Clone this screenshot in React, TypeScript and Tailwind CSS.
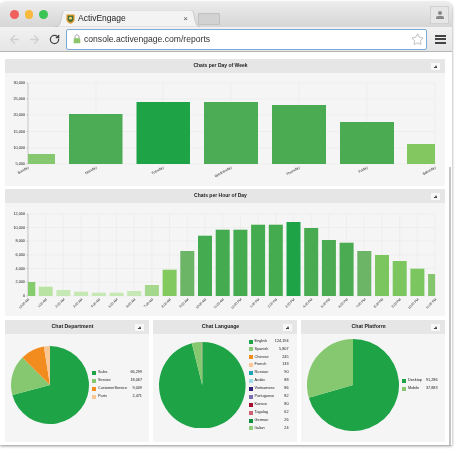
import React from 'react'
import { ArrowLeft, ArrowRight, RotateCw, Star } from 'lucide-react'

type Slice = { end: number; color: string }
type LegendRow = { label: string; value: string; color: string }

const dayTicks = [
  { label: '30,000', y: 83 },
  { label: '25,000', y: 99 },
  { label: '20,000', y: 115 },
  { label: '15,000', y: 131.5 },
  { label: '10,000', y: 148 },
  { label: '5,000', y: 164 },
]

const dayBars = [
  { label: 'Sunday', x: 28, w: 27, top: 154, tick: 28, color: '#85c86f' },
  { label: 'Monday', x: 69, w: 53.5, top: 114, tick: 96, color: '#4cab55' },
  { label: 'Tuesday', x: 136.5, w: 53.5, top: 102, tick: 163, color: '#1ea446' },
  { label: 'Wednesday', x: 204, w: 54, top: 102, tick: 231, color: '#4cab55' },
  { label: 'Thursday', x: 272, w: 54, top: 105, tick: 299, color: '#4aab53' },
  { label: 'Friday', x: 340, w: 54, top: 122, tick: 367, color: '#4aab53' },
  { label: 'Saturday', x: 407, w: 28, top: 144, tick: 435, color: '#82c75f' },
]

const hourTicks = [
  { label: '12,000', y: 214 },
  { label: '10,000', y: 227.5 },
  { label: '8,000', y: 241 },
  { label: '6,000', y: 255 },
  { label: '4,000', y: 268.5 },
  { label: '2,000', y: 282 },
  { label: '0', y: 296 },
]

const hourTops = [282, 286.7, 290, 291.7, 292.7, 292.7, 291, 285, 269.7, 251, 235.7, 229.7, 229.7, 224.7, 224.7, 222, 228, 240, 242.7, 251, 255, 261, 268.7, 274]
const hourColors = ['#85cc6e', '#b9e3a2', '#c5e8b4', '#c5e8b4', '#c5e8b4', '#c5e8b4', '#c5e8b4', '#a4d98d', '#82c95f', '#6cb566', '#44ab50', '#44ab50', '#45ab4f', '#45ab4f', '#45ab4f', '#1ea446', '#48ab52', '#4aab52', '#4aab52', '#6cb566', '#7cc660', '#7cc660', '#7cc660', '#84c56e']
const hourLabels = ['12:00 AM', '1:00 AM', '2:00 AM', '3:00 AM', '4:00 AM', '5:00 AM', '6:00 AM', '7:00 AM', '8:00 AM', '9:00 AM', '10:00 AM', '11:00 AM', '12:00 PM', '1:00 PM', '2:00 PM', '3:00 PM', '4:00 PM', '5:00 PM', '6:00 PM', '7:00 PM', '8:00 PM', '9:00 PM', '10:00 PM', '11:00 PM']

const departments: LegendRow[] = [
  { label: 'Sales', value: '66,299', color: '#1ea446' },
  { label: 'Service', value: '18,067', color: '#85c86f' },
  { label: 'CustomerService', value: '9,009', color: '#f28c1e' },
  { label: 'Parts', value: '2,471', color: '#f9c694' },
]

const languages: LegendRow[] = [
  { label: 'English', value: '124,194', color: '#1ea446' },
  { label: 'Spanish', value: '5,807', color: '#85c86f' },
  { label: 'Chinese', value: '245', color: '#f28c1e' },
  { label: 'French', value: '133', color: '#f9c694' },
  { label: 'Russian', value: '90', color: '#1aa3b8' },
  { label: 'Arabic', value: '88', color: '#9bdde0' },
  { label: 'Vietnamese', value: '86', color: '#331f7a' },
  { label: 'Portuguese', value: '82', color: '#7a6bb8' },
  { label: 'Korean', value: '80', color: '#a50f2d' },
  { label: 'Tagalog', value: '62', color: '#cf5f72' },
  { label: 'German', value: '26', color: '#0f8f3c' },
  { label: 'Italian', value: '24', color: '#8ccc7a' },
]

const platforms: LegendRow[] = [
  { label: 'Desktop', value: '91,286', color: '#1ea446' },
  { label: 'Mobile', value: '37,883', color: '#85c86f' },
]

const Pie = ({ r, slices }: { r: number; slices: Slice[] }) => {
  const point = (deg: number) => {
    const rad = (deg * Math.PI) / 180
    return `${r + r * Math.sin(rad)} ${r - r * Math.cos(rad)}`
  }
  let start = 0
  return (
    <svg width={r * 2} height={r * 2} className="shrink-0">
      {slices.map((s) => {
        const large = s.end - start > 180 ? 1 : 0
        const d = `M${r} ${r}L${point(start)}A${r} ${r} 0 ${large} 1 ${point(s.end)}Z`
        start = s.end
        return <path key={s.end} d={d} fill={s.color} />
      })}
    </svg>
  )
}

const Legend = ({ rows, className }: { rows: LegendRow[]; className: string }) => (
  <div className={`flex flex-col text-[3.8px] text-[#222] ${className}`}>
    {rows.map((row) => (
      <div key={row.label} className="flex h-[7.9px] items-center">
        <span className="mr-[2px] h-[4px] w-[4px] shrink-0" style={{ backgroundColor: row.color }} />
        <span className="flex-1 whitespace-nowrap">{row.label}</span>
        <span>{row.value}</span>
      </div>
    ))}
  </div>
)

const CollapseButton = () => (
  <div className="flex h-[7px] w-[9px] shrink-0 flex-col items-center justify-center bg-[#f8f8f8]">
    <span className="h-0 w-0 border-x-[1.5px] border-b-[2px] border-x-transparent border-b-[#444]" />
    <span className="h-[1px] w-[3px] bg-[#444]" />
  </div>
)

const Panel = ({ title, className, titleClass, children }: { title: string; className: string; titleClass: string; children: React.ReactNode }) => (
  <div className={`flex flex-col bg-[#f5f5f5] ${className}`}>
    <div className="flex h-[14px] shrink-0 items-center bg-[#e6e6e6] px-[5px]">
      <span className={`flex-1 text-center font-bold text-[#222] ${titleClass}`}>{title}</span>
      <CollapseButton />
    </div>
    {children}
  </div>
)

const YAxis = ({ ticks, bottom }: { ticks: { label: string; y: number }[]; bottom: number }) => (
  <g>
    {ticks.map((t) => (
      <g key={t.label}>
        <line x1="28" x2="435" y1={t.y} y2={t.y} stroke="#e9e9e9" strokeWidth="0.6" />
        <line x1="26.5" x2="28" y1={t.y} y2={t.y} stroke="#999" strokeWidth="0.5" />
        <text x="25" y={t.y + 1.3} textAnchor="end" fontSize="3.8" fill="#222">{t.label}</text>
      </g>
    ))}
    <line x1="28" x2="28" y1={ticks[0].y} y2={bottom} stroke="#aaa" strokeWidth="0.6" />
  </g>
)

const DayChart = () => (
  <svg viewBox="5 73 440 113" width="440" height="113">
    {dayBars.slice(1).map((b) => (
      <line key={b.label} x1={b.tick} x2={b.tick} y1="83" y2="164" stroke="#e9e9e9" strokeWidth="0.6" />
    ))}
    <YAxis ticks={dayTicks} bottom={164} />
    {dayBars.map((b) => (
      <g key={b.label}>
        <rect x={b.x} y={b.top} width={b.w} height={164 - b.top} fill={b.color} />
        <text x={b.tick + 1} y="168" textAnchor="end" fontSize="3.6" fill="#222" transform={`rotate(-30 ${b.tick + 1} 168)`}>{b.label}</text>
      </g>
    ))}
  </svg>
)

const HourChart = () => (
  <svg viewBox="5 203 440 113" width="440" height="113">
    {hourLabels.map((l, i) => (
      <line key={l} x1={28 + i * 17.7} x2={28 + i * 17.7} y1="214" y2="296" stroke="#e9e9e9" strokeWidth="0.6" />
    ))}
    <YAxis ticks={hourTicks} bottom={296} />
    {hourTops.map((top, i) => {
      const c = 28 + i * 17.7
      const x = i === 0 ? 28 : c - 7
      const w = i === 0 ? 7.3 : i === 23 ? 7 : 14
      return <rect key={hourLabels[i]} x={x} y={top} width={w} height={296 - top} fill={hourColors[i]} />
    })}
    {hourLabels.map((l, i) => {
      const x = 29.5 + i * 17.7
      return <text key={l} x={x} y="299.5" textAnchor="end" fontSize="3.2" fill="#222" transform={`rotate(-45 ${x} 299.5)`}>{l}</text>
    })}
  </svg>
)

const App = () => {
  return (
    <div className="h-[450px] w-[456px] overflow-hidden bg-white pt-[2px] font-['Liberation_Sans',Arial,sans-serif] blur-[0.35px]">
      <div className="flex h-[443px] w-[452px] flex-col overflow-hidden rounded-t-[6px] bg-white shadow-[0_1px_3px_rgba(0,0,0,0.45)]">
        {/* tab strip */}
        <div className="flex h-[25px] shrink-0 items-end bg-linear-to-b from-[#ececec] to-[#d6d6d6]">
          <div className="flex h-full w-[55px] items-center gap-[6px] pl-[10px]">
            <span className="h-[8.5px] w-[8.5px] rounded-full bg-[#f0605c]" />
            <span className="h-[8.5px] w-[8.5px] rounded-full bg-[#f9b93c]" />
            <span className="h-[8.5px] w-[8.5px] rounded-full bg-[#3cc453]" />
          </div>
          <div className="relative flex h-[17px] w-[145px] items-center pl-[11px] pr-[12px]">
            <svg viewBox="0 0 145 17" width="145" height="17" className="absolute inset-0">
              <path d="M0 17C4 17 5 14 6 10L7.5 3C8 1 9 0 11 0H135C137 0 138 1 138.5 3L140 10C141 14 142 17 145 17Z" fill="#f3f3f3" stroke="#b9b9b9" strokeWidth="0.6" />
            </svg>
            <svg viewBox="0 0 10 11" width="9" height="10" className="relative mr-[3px] shrink-0">
              <path d="M0.5 0.5H9.5V6C9.5 8.5 7 10 5 10.8C3 10 0.5 8.5 0.5 6Z" fill="#d9952b" />
              <path d="M2 2H8V5.8C8 7.2 6.3 8.2 5 8.9C3.7 8.2 2 7.2 2 5.8Z" fill="#3f6d3a" />
              <circle cx="5" cy="4.6" r="1.6" fill="#f0d27a" />
            </svg>
            <span className="relative flex-1 text-[8.5px] text-[#222]">ActivEngage</span>
            <span className="relative text-[8px] leading-none text-[#555]">×</span>
          </div>
          <div className="mb-[2px] ml-[-2px] h-[12px] w-[22px] rounded-[2px] bg-[#d2d2d2] shadow-[inset_0_0_0_0.5px_#b0b0b0]" />
          <div className="mb-[3px] ml-auto mr-[3px] flex h-[18px] w-[19px] flex-col items-center justify-center rounded-[2px] bg-[#e6e6e6] shadow-[inset_0_0_0_0.5px_#bbb]">
            <span className="h-[4px] w-[4px] rounded-full bg-[#888]" />
            <span className="mt-[1px] h-[2.5px] w-[8px] rounded-t-[2px] bg-[#888]" />
          </div>
        </div>
        {/* toolbar */}
        <div className="flex h-[25px] shrink-0 items-center border-b border-[#b5b5b5] bg-linear-to-b from-[#f2f2f2] to-[#e6e6e6]">
          <div className="flex w-[66px] items-center pl-[8px]">
            <ArrowLeft size={13} strokeWidth={2.5} className="text-[#d0d0d0]" />
            <ArrowRight size={13} strokeWidth={2.5} className="ml-[7px] text-[#d0d0d0]" />
            <RotateCw size={11} strokeWidth={2.8} className="ml-[8px] text-[#444]" />
          </div>
          <div className="flex h-[21px] w-[361px] items-center rounded-[2px] border border-[#7cabd9] bg-white pl-[6px] pr-[2px]">
            <svg viewBox="0 0 9 11" width="8" height="10" className="mr-[3px] shrink-0">
              <path d="M2.2 5V3.2C2.2 1.8 3.2 0.8 4.5 0.8S6.8 1.8 6.8 3.2V5" fill="none" stroke="#9a9a9a" strokeWidth="1" />
              <rect x="0.8" y="4.6" width="7.4" height="5.8" rx="0.8" fill="#8cc56a" />
            </svg>
            <span className="flex-1 text-[8.6px] text-[#333]">console.activengage.com/reports</span>
            <Star size={13} strokeWidth={1} className="text-[#8a8a8a]" />
          </div>
          <div className="ml-[8px] flex w-[11px] flex-col gap-[1.5px]">
            <span className="h-[2px] bg-[#444]" />
            <span className="h-[2px] bg-[#444]" />
            <span className="h-[2px] bg-[#444]" />
          </div>
        </div>
        {/* page */}
        <div className="flex min-h-0 flex-1">
          <div className="flex w-[449px] shrink-0 flex-col pl-[5px] pt-[7px]">
            <Panel title="Chats per Day of Week" className="h-[127px] w-[440px]" titleClass="text-[5px]">
              <DayChart />
            </Panel>
            <Panel title="Chats per Hour of Day" className="mt-[3px] h-[127px] w-[440px]" titleClass="text-[5px]">
              <HourChart />
            </Panel>
            <div className="mt-[4px] flex w-[440px] gap-[4px]">
              <Panel title="Chat Department" className="h-[122px] w-[144px]" titleClass="text-[5.2px]">
                <div className="flex flex-1 items-center pb-[6px] pl-[6px]">
                  <Pie r={39} slices={[{ end: 255, color: '#1ea446' }, { end: 315, color: '#85c86f' }, { end: 351, color: '#f28c1e' }, { end: 360, color: '#f9c694' }]} />
                  <Legend rows={departments} className="ml-[3px] w-[50px]" />
                </div>
              </Panel>
              <Panel title="Chat Language" className="h-[122px] w-[144px]" titleClass="text-[5.2px]">
                <div className="flex flex-1 items-center pb-[6px] pl-[6px]">
                  <Pie r={43.3} slices={[{ end: 346, color: '#1ea446' }, { end: 359, color: '#85c86f' }, { end: 360, color: '#9a9a6a' }]} />
                  <Legend rows={languages} className="ml-[3px] w-[40px]" />
                </div>
              </Panel>
              <Panel title="Chat Platform" className="h-[122px] w-[144px]" titleClass="text-[5.2px]">
                <div className="flex flex-1 items-center pb-[6px] pl-[6px]">
                  <Pie r={46} slices={[{ end: 254, color: '#1ea446' }, { end: 360, color: '#85c86f' }]} />
                  <Legend rows={platforms} className="ml-[3px] w-[35.5px]" />
                </div>
              </Panel>
            </div>
          </div>
          <div className="w-[3px] shrink-0 pt-[115px]">
            <div className="h-full w-[2px] bg-[#c4c4c4]" />
          </div>
        </div>
      </div>
    </div>
  )
}

export default App
